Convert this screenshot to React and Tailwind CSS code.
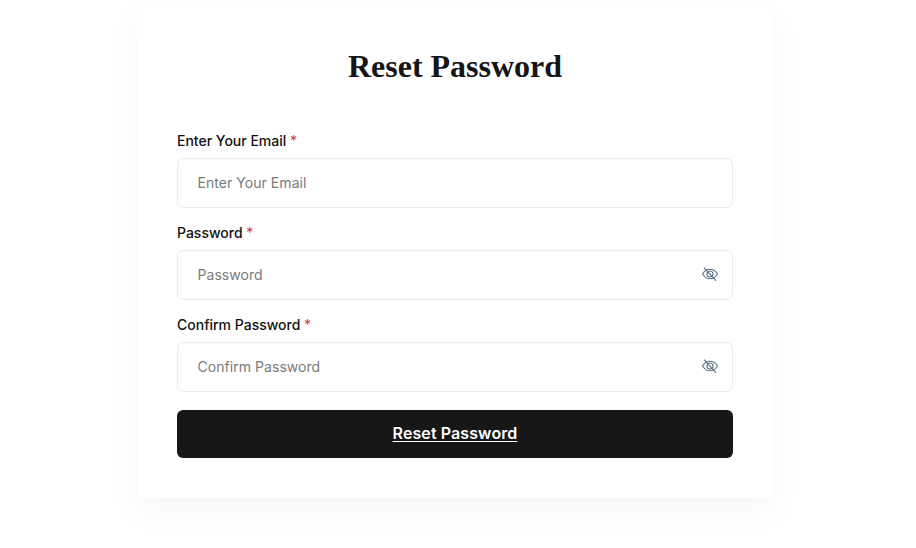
import React from 'react';

const EyeOff = () => (
  <svg className="mb-[2px]" width="18" height="18" viewBox="0 0 24 24" fill="none" stroke="#64748b" strokeWidth="1.5" strokeLinecap="round" strokeLinejoin="round">
    <path d="M2 12C4.400 7.800 7.800 5.600 12 5.600s7.600 2.200 10 6.400c-2.400 4.200-5.800 6.400-10 6.400S4.400 16.200 2 12z" />
    <circle cx="12" cy="12" r="4" />
    <path d="M4.500 4l15 16.500" />
  </svg>
);

const Field = ({ label, placeholder, icon }) => (
  <div className="mb-[14px]">
    <label className="block h-[22px] mb-[6px] text-[14px] leading-[22px] font-medium text-[#111111]">
      {label} <span className="text-[#d9363e] font-normal">*</span>
    </label>
    <div className="flex items-center h-[50px] pl-[19.5px] pr-[13px] bg-white border border-[#e9ecef] rounded-md">
      <input
        type={icon ? 'password' : 'text'}
        placeholder={placeholder}
        className="flex-1 min-w-0 pb-[2px] text-[14px] tracking-[0.05px] outline-none text-[#111111] placeholder:text-[#7a7a7a]"
      />
      {icon && <EyeOff />}
    </div>
  </div>
);

export default function App() {
  return (
    <div className="min-h-screen w-[910px] bg-white pt-2 font-['Inter',sans-serif]">
      <div className="w-[636px] h-[490px] mx-auto px-10 pt-[36px] bg-white rounded-md shadow-[0_12px_36px_rgba(0,0,0,0.045)]">
        <h1 className="mb-[40px] h-[46px] text-center font-['Liberation_Serif',serif] text-[32px] leading-[44px] font-bold text-[#151515]">
          Reset Password
        </h1>
        <Field label="Enter Your Email" placeholder="Enter Your Email" />
        <Field label="Password" placeholder="Password" icon />
        <Field label="Confirm Password" placeholder="Confirm Password" icon />
        <button className="block w-full h-[48px] mt-[18px] pb-[2px] bg-[#171717] rounded-md text-white text-[16px] font-semibold tracking-[0.1px] underline underline-offset-2 font-['Inter',sans-serif]">
          Reset Password
        </button>
      </div>
    </div>
  );
}
